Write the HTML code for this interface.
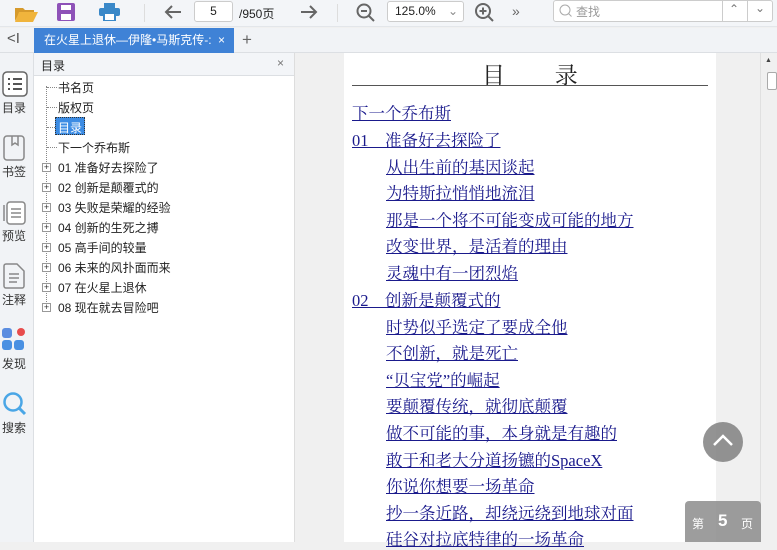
<!DOCTYPE html>
<html><head><meta charset="utf-8"><style>
*{margin:0;padding:0;box-sizing:border-box}
body{width:777px;height:542px;overflow:hidden;position:relative;background:#f0f0f0;font-family:"Liberation Sans","Noto Sans CJK SC",sans-serif;font-size:12px;color:#222}
.abs{position:absolute}
#tb{left:0;top:0;width:777px;height:27px;background:#f3f5f8;border-bottom:1px solid #e3e6ea}
#tabs{left:0;top:28px;width:777px;height:25px;background:#f1f3f6;border-bottom:1px solid #dcdfe3}
#rail{left:0;top:53px;width:34px;height:489px;background:#f1f3f6;border-right:1px solid #dcdfe3}
#panel{left:34px;top:53px;width:261px;height:489px;background:#fff;border-right:1px solid #ddd}
#ph{left:0;top:0;width:260px;height:23px;background:#f3f5f8;border-bottom:1px solid #dcdfe3}
.t{position:absolute;font-size:12px;white-space:nowrap}
.plus{position:absolute;width:9px;height:9px;border:1px solid #999;background:#fff;font-size:9px;line-height:7px;text-align:center;color:#333}
.h{position:absolute;left:13px;width:10px;height:0;border-top:1px dotted #888}
#page{left:344px;top:53px;width:372px;height:489px;background:#fff}
.e{position:absolute;font-family:"Liberation Serif","Noto Serif CJK SC",serif;font-size:16.5px;color:#1a1a8c;text-decoration:underline;white-space:nowrap}
.rl{position:absolute;left:0;width:34px;text-align:center;font-size:12px;color:#333}
</style></head><body>
<div id="tb" class="abs">
 <svg class="abs" style="left:14px;top:4px" width="24" height="18"><path d="M1 4h8l2 2h9v2H6L1 17z" fill="#d69a2c"/><path d="M5 8h19l-5 10H1z" fill="#f0b43c"/></svg>
 <svg class="abs" style="left:57px;top:3px" width="18" height="18"><rect x="0" y="0" width="18" height="18" rx="2" fill="#8e52b8"/><rect x="4" y="2" width="10" height="5" fill="#fff"/><rect x="4" y="11" width="10" height="6" fill="#fff"/></svg>
 <svg class="abs" style="left:99px;top:3px" width="21" height="18"><rect x="5" y="0" width="11" height="5" fill="#3a88c8"/><rect x="0" y="5" width="21" height="8" rx="2" fill="#3a88c8"/><rect x="5" y="10" width="11" height="8" fill="#fff" stroke="#3a88c8" stroke-width="2"/></svg>
 <div class="abs" style="left:144px;top:4px;width:1px;height:18px;background:#ddd"></div>
 <svg class="abs" style="left:163px;top:3px" width="20" height="18"><path d="M18 9H3M9 3L3 9l6 6" stroke="#666" stroke-width="2" fill="none"/></svg>
 <div class="abs" style="left:194px;top:1px;width:39px;height:21px;background:#fff;border:1px solid #ccc;border-radius:3px;text-align:center;line-height:19px;font-size:12px">5</div>
 <div class="t" style="left:239px;top:5px;font-size:12px">/950页</div>
 <svg class="abs" style="left:299px;top:3px" width="20" height="18"><path d="M2 9h15M11 3l6 6-6 6" stroke="#666" stroke-width="2" fill="none"/></svg>
 <div class="abs" style="left:337px;top:4px;width:1px;height:18px;background:#ddd"></div>
 <svg class="abs" style="left:356px;top:3px" width="20" height="20"><circle cx="8" cy="8" r="6.5" stroke="#666" stroke-width="2" fill="none"/><path d="M5 8h6M13 13l5 5" stroke="#666" stroke-width="2"/></svg>
 <div class="abs" style="left:387px;top:1px;width:77px;height:21px;background:#fff;border:1px solid #ccc;border-radius:3px;font-size:12px;line-height:19px;padding-left:7px">125.0% <span style="position:absolute;right:5px;color:#888">&#8964;</span></div>
 <svg class="abs" style="left:474px;top:2px" width="22" height="22"><circle cx="9" cy="9" r="7" stroke="#666" stroke-width="2" fill="none"/><path d="M5.5 9h7M9 5.5v7M14 14l5 5" stroke="#666" stroke-width="2"/></svg>
 <div class="t" style="left:512px;top:3px;color:#666;font-size:14px">»</div>
 <div class="abs" style="left:553px;top:0;width:220px;height:22px;background:#fff;border:1px solid #ccc;border-radius:3px"></div>
 <svg class="abs" style="left:559px;top:4px" width="14" height="14"><circle cx="6" cy="6" r="5" stroke="#aaa" fill="none"/><path d="M9.5 9.5l3 3" stroke="#aaa"/></svg>
 <div class="t" style="left:576px;top:3px;color:#999;font-size:12px">查找</div>
 <div class="abs" style="left:722px;top:0;width:1px;height:22px;background:#ccc"></div>
 <div class="abs" style="left:747px;top:0;width:1px;height:22px;background:#ccc"></div>
 <div class="t" style="left:729px;top:2px;color:#777">&#8963;</div>
 <div class="t" style="left:755px;top:1px;color:#777">&#8964;</div>
</div>
<div id="tabs" class="abs">
 <div class="t" style="left:7px;top:2px;font-size:15px;color:#555">&lt;I</div>
 <div class="abs" style="left:34px;top:0;width:200px;height:25px;background:#3f82d6;color:#fff;font-size:12px;line-height:25px;padding-left:10px;white-space:nowrap;overflow:hidden">在火星上退休—伊隆•马斯克传-:<span style="position:absolute;left:184px">×</span></div>
 <div class="t" style="left:242px;top:2px;font-size:17px;color:#666">+</div>
</div>
<div id="rail" class="abs">
 <svg class="abs" style="left:2px;top:18px" width="26" height="26"><rect x="1" y="1" width="24" height="24" rx="4" stroke="#666" stroke-width="1.5" fill="#fff"/><path d="M6 8h2M11 8h9M6 13h2M11 13h9M6 18h2M11 18h9" stroke="#555" stroke-width="2"/></svg>
 <div class="rl" style="top:46px;left:-3px">目录</div>
 <svg class="abs" style="left:3px;top:82px" width="22" height="26"><rect x="1" y="1" width="20" height="24" rx="3" stroke="#888" stroke-width="1.5" fill="none"/><path d="M9 1v9l3-2 3 2V1" stroke="#888" stroke-width="1.5" fill="none"/></svg>
 <div class="rl" style="top:110px;left:-3px">书签</div>
 <svg class="abs" style="left:2px;top:146px" width="24" height="26"><rect x="5" y="3" width="18" height="22" rx="3" stroke="#888" stroke-width="1.5" fill="#fff"/><path d="M2 6v16M9 10h10M9 14h10M9 18h10" stroke="#888" stroke-width="1.5"/></svg>
 <div class="rl" style="top:174px;left:-3px">预览</div>
 <svg class="abs" style="left:3px;top:210px" width="22" height="26"><path d="M1 3a2 2 0 012-2h11l7 7v15a2 2 0 01-2 2H3a2 2 0 01-2-2z" stroke="#888" stroke-width="1.5" fill="none"/><path d="M6 11h10M6 15h10M6 19h8" stroke="#888" stroke-width="1.5"/></svg>
 <div class="rl" style="top:238px;left:-3px">注释</div>
 <svg class="abs" style="left:2px;top:274px" width="24" height="24"><rect x="0" y="1" width="10" height="10" rx="3" fill="#5b8de0"/><circle cx="19" cy="5" r="4" fill="#e84c4c"/><rect x="0" y="13" width="10" height="10" rx="3" fill="#4a90e2"/><rect x="12" y="13" width="10" height="10" rx="3" fill="#4a90e2"/></svg>
 <div class="rl" style="top:302px;left:-3px">发现</div>
 <svg class="abs" style="left:2px;top:338px" width="26" height="26"><circle cx="11" cy="11" r="8.5" stroke="#4aa6e6" stroke-width="2.5" fill="none"/><path d="M17 17l6 6" stroke="#4aa6e6" stroke-width="3"/></svg>
 <div class="rl" style="top:366px;left:-3px">搜索</div>
</div>
<div id="panel" class="abs">
 <div id="ph" class="abs"><div class="t" style="left:7px;top:4px">目录</div><div class="t" style="left:243px;top:3px;color:#777">×</div></div>
 <div class="abs" style="left:12px;top:33px;width:0;height:222px;border-left:1px dotted #888"></div>
 <div class="h" style="top:34px"></div>
 <div class="h" style="top:54px"></div>
 <div class="h" style="top:74px;width:8px"></div>
 <div class="h" style="top:94px"></div>
 <div class="abs" style="left:21px;top:64px;width:30px;height:18px;background:#3c8ce4;border:1px dotted #333"></div>
 <div class="t" style="left:24px;top:26px">书名页</div>
 <div class="t" style="left:24px;top:46px">版权页</div>
 <div class="t" style="left:24px;top:66px;color:#fff">目录</div>
 <div class="t" style="left:24px;top:86px">下一个乔布斯</div>
 <div class="plus" style="left:8px;top:110px">+</div><div class="t" style="left:24px;top:106px">01 准备好去探险了</div>
 <div class="plus" style="left:8px;top:130px">+</div><div class="t" style="left:24px;top:126px">02 创新是颠覆式的</div>
 <div class="plus" style="left:8px;top:150px">+</div><div class="t" style="left:24px;top:146px">03 失败是荣耀的经验</div>
 <div class="plus" style="left:8px;top:170px">+</div><div class="t" style="left:24px;top:166px">04 创新的生死之搏</div>
 <div class="plus" style="left:8px;top:190px">+</div><div class="t" style="left:24px;top:186px">05 高手间的较量</div>
 <div class="plus" style="left:8px;top:210px">+</div><div class="t" style="left:24px;top:206px">06 未来的风扑面而来</div>
 <div class="plus" style="left:8px;top:230px">+</div><div class="t" style="left:24px;top:226px">07 在火星上退休</div>
 <div class="plus" style="left:8px;top:250px">+</div><div class="t" style="left:24px;top:246px">08 现在就去冒险吧</div>
</div>
<div id="page" class="abs">
 <div class="t" style="left:138px;top:4px;font-family:'Liberation Serif','Noto Serif CJK SC',serif;font-size:23px;color:#222;letter-spacing:22px">目 录</div>
 <div class="abs" style="left:8px;top:32px;width:356px;height:1px;background:#555"></div>
 <div class="e" style="left:8px;top:47px">下一个乔布斯</div>
 <div class="e" style="left:8px;top:74px">01　准备好去探险了</div>
 <div class="e" style="left:42px;top:101px">从出生前的基因谈起</div>
 <div class="e" style="left:42px;top:127px">为特斯拉悄悄地流泪</div>
 <div class="e" style="left:42px;top:154px">那是一个将不可能变成可能的地方</div>
 <div class="e" style="left:42px;top:180px">改变世界，是活着的理由</div>
 <div class="e" style="left:42px;top:207px">灵魂中有一团烈焰</div>
 <div class="e" style="left:8px;top:234px">02　创新是颠覆式的</div>
 <div class="e" style="left:42px;top:261px">时势似乎选定了要成全他</div>
 <div class="e" style="left:42px;top:287px">不创新，就是死亡</div>
 <div class="e" style="left:42px;top:314px">“贝宝党”的崛起</div>
 <div class="e" style="left:42px;top:340px">要颠覆传统，就彻底颠覆</div>
 <div class="e" style="left:42px;top:367px">做不可能的事，本身就是有趣的</div>
 <div class="e" style="left:42px;top:394px">敢于和老大分道扬镳的SpaceX</div>
 <div class="e" style="left:42px;top:420px">你说你想要一场革命</div>
 <div class="e" style="left:42px;top:447px">抄一条近路，却绕远绕到地球对面</div>
 <div class="e" style="left:42px;top:473px">硅谷对拉底特律的一场革命</div>
</div>
<div class="abs" style="left:760px;top:53px;width:17px;height:489px;background:#f0f0f0;border-left:1px solid #e0e0e0"></div>
<div class="t" style="left:765px;top:57px;font-size:7px;color:#444">▲</div>
<div class="abs" style="left:767px;top:72px;width:10px;height:18px;background:#fff;border:1px solid #aaa;border-radius:2px"></div>
<div class="abs" style="left:703px;top:422px;width:40px;height:40px;border-radius:50%;background:rgba(128,128,128,.85)"></div>
<svg class="abs" style="left:711px;top:432px" width="24" height="16"><path d="M3 13l9-9 9 9" stroke="#fff" stroke-width="2.5" fill="none"/></svg>
<div class="abs" style="left:685px;top:501px;width:76px;height:41px;border-radius:4px 4px 0 0;background:rgba(140,140,140,.85);color:#fff;font-size:12px">
 <span style="position:absolute;left:7px;top:14px">第</span><span style="position:absolute;left:33px;top:10px;font-size:17px;font-weight:bold">5</span><span style="position:absolute;left:56px;top:14px">页</span></div>
</body></html>
